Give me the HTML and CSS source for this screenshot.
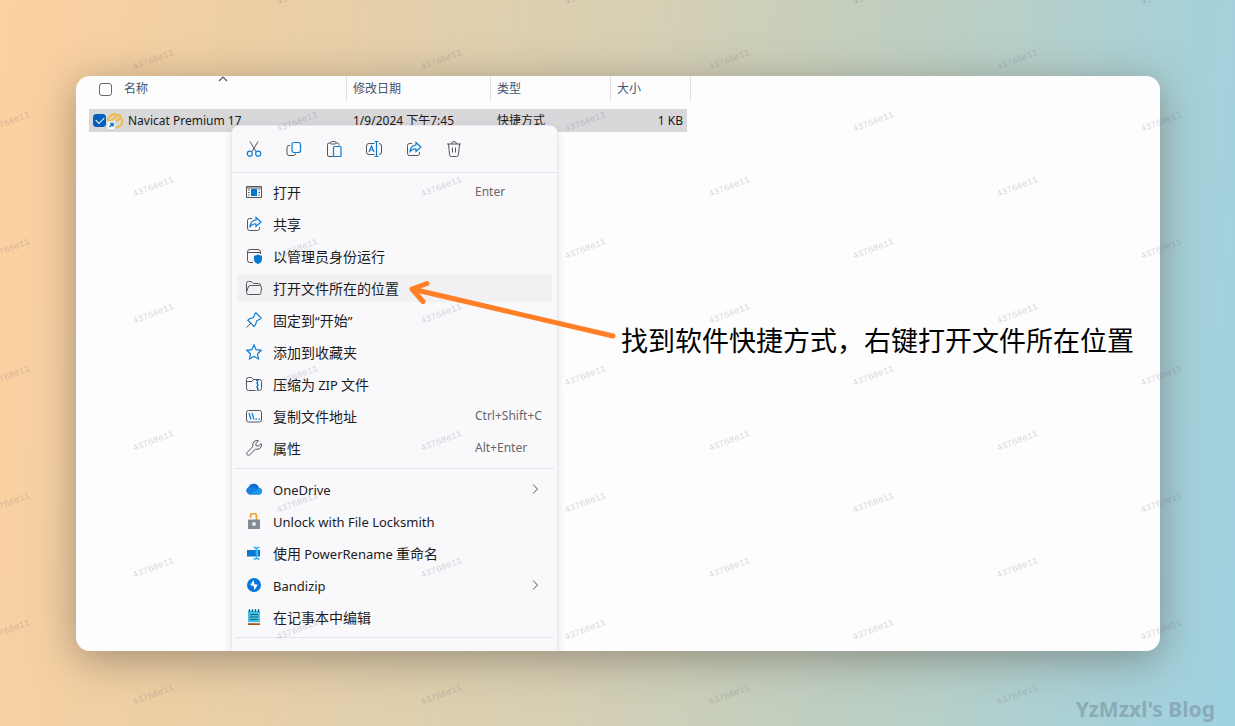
FILE: index.html
```html
<!DOCTYPE html>
<html lang="zh-CN">
<head>
<meta charset="utf-8">
<title>Navicat Premium 17</title>
<link rel="stylesheet" href="styles.css">
</head>
<body>
<main class="stage">
  <section class="window">
    <table class="files">
      <colgroup><col class="c-name"><col class="c-date"><col class="c-type"><col class="c-size"></colgroup>
      <thead>
        <tr>
          <th>
            <div class="name-cell head">
              <input type="checkbox" class="tick" id="all" aria-label="全选">
              <label for="all">名称</label>
              <svg class="sort" width="10" height="6" viewBox="0 0 10 6"><path d="M1 5l4-4 4 4" fill="none" stroke="#555" stroke-width="1.2"/></svg>
            </div>
          </th>
          <th>修改日期</th><th>类型</th><th>大小</th>
        </tr>
      </thead>
      <tbody>
        <tr>
          <td>
            <div class="name-cell">
              <input type="checkbox" class="tick" id="row" checked>
              <svg width="17" height="16" viewBox="0 0 16 16">
                <path d="M1 10C-.5 6 3 1.500 7 1c2-.2 2.500 2 1 3.500C6 6.500 2.500 7 1.500 9M7 4c3-3 6-2.500 6 0s-2.500 3-4.500 4M11 5c4-1 5 4 2.500 7-1.500 2-3.500 2.500-5.500 2.500" fill="none" stroke="#edbd4c" stroke-width="2"/>
                <path d="M0 8.500h7V16H0z" fill="#fff"/><path d="M2 14l3-3M2.600 10.500H5.500V13.500" fill="none" stroke="#0878c8" stroke-width="1.500"/>
              </svg>
              <label for="row">Navicat Premium 17</label>
            </div>
          </td>
          <td>1/9/2024 下午7:45</td><td>快捷方式</td><td class="size">1 KB</td>
        </tr>
      </tbody>
    </table>

    <div class="menu">
      <div class="tools">
        <button type="button" aria-label="剪切"><svg viewBox="0 0 16 16"><path class="g" d="M4 .5l6.200 10.500M12 .5L5.800 11"/><circle class="b" cx="3.800" cy="12.700" r="2.500"/><circle class="b" cx="12.200" cy="12.700" r="2.500"/></svg></button>
        <button type="button" aria-label="复制"><svg viewBox="0 0 16 16"><path class="g" d="M4 4.500H3A2 2 0 0 0 1 6.500v6A2 2 0 0 0 3 14.500h4.500a2 2 0 0 0 2-2"/><rect class="b" x="6" y="1.500" width="8.500" height="10" rx="2"/></svg></button>
        <button type="button" aria-label="粘贴"><svg viewBox="0 0 16 16"><path class="g" d="M4.500 2H3A1.500 1.500 0 0 0 1.500 3.500v10.500A1.500 1.500 0 0 0 3 15.500h4M10 2h1.500a1.500 1.500 0 0 1 1.500 1.500v1"/><rect class="g" x="4.500" y=".6" width="5.500" height="2.400" rx="1"/><rect class="b" x="7.500" y="5.500" width="7.500" height="10" rx="1"/></svg></button>
        <button type="button" aria-label="重命名"><svg viewBox="0 0 16 16"><path class="g" d="M8.500 2.500H3A2.500 2.500 0 0 0 .5 5v6A2.500 2.500 0 0 0 3 13.500h5.500M13 2.500a2.500 2.500 0 0 1 2.500 2.500v6a2.500 2.500 0 0 1-2.500 2.500"/><path class="b" d="M8.500.5h4M8.500 15.500h4M10.500.5v15M3 11l2.500-6L8 11M4 9h3"/></svg></button>
        <button type="button" aria-label="共享"><svg viewBox="0 0 16 16"><path class="g" d="M6 2.500H3.500a2 2 0 0 0-2 2v8a2 2 0 0 0 2 2h8a2 2 0 0 0 2-2V11"/><path class="b" d="M10 1.500L15 6l-5 4.500V8C7.500 7.800 5.800 8.500 4 10.500 4.500 6.500 6.500 4.300 10 4z"/></svg></button>
        <button type="button" aria-label="删除"><svg viewBox="0 0 16 16"><path class="g" d="M1 3h14M2.500 3l1 10.500a2 2 0 0 0 2 2h5a2 2 0 0 0 2-2l1-10.500M5.500 3a2.500 2.500 0 0 1 5 0M6.500 6.500v5M9.500 6.500v5"/></svg></button>
      </div>

      <div class="items">
        <button type="button" class="item"><svg viewBox="0 0 16 16"><path class="g" d="M.5 2.500h15v11H.5zM.5 4h15M2 6h1.500M2 8.500h1.500M2 11h1.500M12.500 6H14M12.500 8.500H14M12.500 11H14"/><path d="M5 5h6v7H5z" fill="#0078d4"/></svg><span>打开</span><kbd>Enter</kbd></button>
        <button type="button" class="item"><svg viewBox="0 0 16 16"><path class="g" d="M6 2.500H3.500a2 2 0 0 0-2 2v8a2 2 0 0 0 2 2h8a2 2 0 0 0 2-2V11"/><path class="b" d="M10 1.500L15 6l-5 4.500V8C7.500 7.800 5.800 8.500 4 10.500 4.500 6.500 6.500 4.300 10 4z"/></svg><span>共享</span></button>
        <button type="button" class="item"><svg viewBox="0 0 16 16"><path class="g" d="M7 14.500H4A2.500 2.500 0 0 1 1.500 12V4A2.500 2.500 0 0 1 4 1.500h8A2.500 2.500 0 0 1 14.500 4v2M1.500 4.500h13"/><path d="M12 6.300c1.200 1 2.500 1.400 4 1.400v3.500c0 2.300-1.500 3.800-4 4.800-2.500-1-4-2.500-4-4.800V7.700c1.500 0 2.800-.4 4-1.400z" fill="#0078d4"/></svg><span>以管理员身份运行</span></button>
        <button type="button" class="item current"><svg viewBox="0 0 16 16"><path class="g" d="M.5 12V3.500a2 2 0 0 1 2-2h2.700L7.500 3.500h5a2 2 0 0 1 2 2M.5 12l1.800-5a2 2 0 0 1 1.900-1.500h9.300a2 2 0 0 1 2 2.200l-.5 4.800a2 2 0 0 1-2 2H2.500a2 2 0 0 1-2-2"/></svg><span>打开文件所在的位置</span></button>
        <button type="button" class="item"><svg viewBox="0 0 16 16"><path class="b" d="M10 .8l5.200 5.200-1 1-3.500 1.800-1.200 4L8 14.300 1.900 8.200l1.500-1.400 4-1.300L9 1.800z"/><path class="g" d="M5 11L.5 15.500"/></svg><span>固定到<i>“</i>开始<i>”</i></span></button>
        <button type="button" class="item"><svg viewBox="0 0 16 16"><path class="b" d="M8 1l2.100 4.700 5.200.6-3.800 3.500 1 5.100L8 12.400l-4.500 2.500 1-5.100L.7 6.300l5.200-.6z"/></svg><span>添加到收藏夹</span></button>
        <button type="button" class="item"><svg viewBox="0 0 16 16"><path class="g" d="M9.500 14.500h-7a2 2 0 0 1-2-2v-9a2 2 0 0 1 2-2h3L7.500 3.500h6a2 2 0 0 1 2 2v7a2 2 0 0 1-2 2h-1M.5 5.500H6l1.500-2"/><path class="b" d="M11.500 4v11M10 4.500h2.500M10 7h1.500M11.500 9H13M10 11h1.500M11.500 13H13"/></svg><span>压缩为 <i>ZIP</i> 文件</span></button>
        <button type="button" class="item"><svg viewBox="0 0 16 16"><rect class="g" x=".5" y="2.500" width="15" height="11.500" rx="2"/><path class="b" d="M3 5l2 6.500M6 5l2 6.500M9.500 11.200H11M12.500 11.200H14"/></svg><span>复制文件地址</span><kbd>Ctrl+Shift+C</kbd></button>
        <button type="button" class="item"><svg viewBox="0 0 16 16"><path class="g" d="M12.500.8A4.300 4.300 0 0 0 7 6.500L1.200 12.300a1.700 1.700 0 0 0 2.500 2.500L9.500 9A4.300 4.300 0 0 0 15.200 3.500L12.500 6 10 5.800 9.900 3.500z"/></svg><span>属性</span><kbd>Alt+Enter</kbd></button>
        <hr>
        <button type="button" class="item"><svg viewBox="0 0 16 16"><path d="M3.500 13.500a4 4 0 0 1-.8-7.500A5.500 5.500 0 0 1 13 6.800a3.400 3.400 0 0 1 0 6.700z" fill="#0a6fd0"/><path d="M4 13.500l8-6c2.500-1.200 5 1.500 3.800 4A3 3 0 0 1 13 13.500z" fill="#1b9bf0"/><path d="M2.700 6C6 5 8 7 11.500 8L4 13.500H3.500A4 4 0 0 1 2.700 6z" fill="#1482dd"/></svg><span><i>OneDrive</i></span><svg class="more" viewBox="0 0 16 16"><path class="g" d="M6 3.500l4.500 4.500L6 12.500"/></svg></button>
        <button type="button" class="item"><svg viewBox="0 0 16 16"><path d="M4.500 5V3.500a3 3 0 0 1 6-.5v4" fill="none" stroke="#f2a12c" stroke-width="1.800"/><path d="M2 6.500h12V16H2z" fill="#858b94"/><circle cx="8" cy="11" r="2" fill="#e6e8eb"/></svg><span><i>Unlock with File Locksmith</i></span></button>
        <button type="button" class="item"><svg viewBox="0 0 16 16"><path d="M1 5h9v6.500H1z" fill="#0878d0"/><path d="M11.500 5H14v6.500h-2.500z" fill="#0878d0"/><path d="M7.500 2.500h1.500l1.500 1 1.500-1H13.500M7.500 14h1.500l1.500-1 1.500 1H13.500M10.500 3v10.500" fill="none" stroke="#35b0ee" stroke-width="1.600"/></svg><span>使用 <i>PowerRename</i> 重命名</span></button>
        <button type="button" class="item"><svg viewBox="0 0 16 16"><circle cx="8" cy="8" r="7" fill="#0877dc"/><path d="M7.500 3L4.200 8.200l3.300.5L8.500 13l3.300-5.200-3.300-.5z" fill="#fff"/></svg><span><i>Bandizip</i></span><svg class="more" viewBox="0 0 16 16"><path class="g" d="M6 3.500l4.500 4.500L6 12.500"/></svg></button>
        <button type="button" class="item"><svg viewBox="0 0 16 16"><path d="M2 1.500h12V14H2z" fill="#43bde0"/><path d="M2 14h12v2H2z" fill="#a65214"/><path d="M2 13.300h12v1H2z" fill="#fff"/><path d="M4 5.500h8M4 8h8M4 10.500h8M3.500 0v3M6.500 0v3M9.500 0v3M12.500 0v3" stroke="#126a87" stroke-width="1.100"/></svg><span>在记事本中编辑</span></button>
        <hr>
      </div>
    </div>

    <div class="callout">
      <svg class="arrow" width="210" height="64" viewBox="0 0 210 64"><path d="M206 59L5 12M20 6.500L5 12l11 12.500" fill="none" stroke="#ff7f27" stroke-width="5" stroke-linecap="round" stroke-linejoin="round"/></svg>
      <p>找到软件快捷方式，右键打开文件所在位置</p>
    </div>
  </section>
  <footer>YzMzxl's Blog</footer>
  <svg class="watermark" aria-hidden="true">
    <defs>
      <pattern id="mark" width="288" height="127" patternUnits="userSpaceOnUse">
        <text transform="translate(134 70) rotate(-21)">43768e11</text>
        <text transform="translate(-10 5) rotate(-21)">43768e11</text>
        <text transform="translate(278 5) rotate(-21)">43768e11</text>
        <text transform="translate(-10 132) rotate(-21)">43768e11</text>
        <text transform="translate(278 132) rotate(-21)">43768e11</text>
      </pattern>
    </defs>
    <rect width="100%" height="100%" fill="url(#mark)"/>
  </svg>
</main>
</body>
</html>
```
FILE: styles.css
```css
* { box-sizing: border-box; }

body {
  margin: 0;
  font-family: "Noto Sans", "Noto Sans CJK SC", sans-serif;
  font-size: 12px;
  color: #1a1a1a;
}

.stage {
  position: relative;
  display: flex;
  flex-direction: column;
  height: 100vh;
  padding: 76px 75px 0 76px;
  overflow: hidden;
  background: linear-gradient(97deg, #fdd1a0 0%, #eccfa5 20%, #d5cfb4 50%, #bccfc3 72%, #a5d1da 92%, #a0d2e0 100%);
}

.window {
  position: relative;
  flex: 1;
  overflow: hidden;
  border-radius: 14px;
  background: #fdfdfe;
}

.stage::before {
  content: "";
  position: absolute;
  inset: 76px 75px 75px 76px;
  border-radius: 14px;
  box-shadow: 0 8px 40px rgba(90, 80, 70, .5);
}

.files {
  width: 602px;
  margin-left: 13px;
  table-layout: fixed;
  border-spacing: 0;
}

.c-name { width: 258px; }
.c-date { width: 144px; }
.c-type { width: 120px; }
.c-size { width: 80px; }

.files th {
  height: 26px;
  padding: 0 6px;
  border-right: 1px solid #e6dfea;
  font-weight: 400;
  line-height: 26px;
  text-align: left;
  color: #44546f;
}

.files td {
  height: 30px;
  padding: 0 6px;
  border-top: 7px solid transparent;
  background: #d8d7d9;
  background-clip: padding-box;
  line-height: 23px;
}

.files th:first-child,
.files td:first-child { padding: 0 4px; }

.files td.size {
  border-right: 4px solid transparent;
  padding-right: 4px;
  text-align: right;
}

.name-cell {
  position: relative;
  display: flex;
  align-items: center;
}

.name-cell svg + label { margin-left: 4px; }

.head { padding-left: 6px; }
.head label { margin-left: 12px; }

.sort {
  position: absolute;
  left: 125px;
  top: 0;
}

.tick {
  appearance: none;
  flex: none;
  display: grid;
  place-items: center;
  width: 13px;
  height: 13px;
  margin: 0;
  border: 1px solid #6a6670;
  border-radius: 3px;
  background: #fff;
}

.tick:checked {
  margin-right: 1px;
  border-color: #0560bd;
  background: #0560bd;
}

.tick:checked::before {
  content: "";
  width: 7px;
  height: 4px;
  margin-bottom: 2px;
  border: solid #fff;
  border-width: 0 0 1px 1px;
  transform: rotate(-45deg);
}

.menu {
  position: absolute;
  left: 155px;
  top: 49px;
  width: 327px;
  height: 600px;
  border: 1px solid #ebe7ee;
  border-radius: 8px;
  background: #f9f8fa;
  box-shadow: 0 3px 8px rgba(60, 50, 70, .12);
}

.tools {
  display: flex;
  align-items: center;
  height: 47px;
  padding-left: 2px;
  border-bottom: 1px solid #e8e4eb;
}

.tools button {
  display: grid;
  place-items: center;
  width: 40px;
  height: 40px;
  padding: 0;
  border: 0;
  background: none;
}

.tools svg,
.item svg {
  flex: none;
  width: 16px;
  height: 16px;
}

.g { fill: none; stroke: #55555a; stroke-width: 1; }
.b { fill: none; stroke: #0a7cd6; stroke-width: 1.2; }

.items {
  display: flex;
  flex-direction: column;
  gap: 4px;
  padding: 5px 5px;
}

.item {
  display: grid;
  grid-template-columns: 16px 191px 1fr;
  column-gap: 11px;
  align-items: center;
  height: 28px;
  padding: 0 0 0 9px;
  border: 0;
  border-radius: 4px;
  background: none;
  font: 14px/20px "Noto Sans CJK SC", sans-serif;
  text-align: left;
  color: #1c1c1e;
  white-space: nowrap;
}

.item.current { background: #f1f0f2; }

.item i {
  font: 13px/20px "Noto Sans", sans-serif;
}

.item kbd {
  font: 12px/20px "Noto Sans", sans-serif;
  color: #68666c;
}

.item .more { margin-left: 52px; }

.items hr {
  height: 1px;
  margin: 2px -2px;
  border: 0;
  background: #e8e4eb;
}

.callout {
  position: absolute;
  left: 331px;
  top: 201px;
  display: flex;
  align-items: flex-start;
  gap: 4px;
}

.callout p {
  margin: 43px 0 0;
  font: 27px/40px "Noto Sans CJK SC", sans-serif;
  color: #000;
  white-space: nowrap;
}

footer {
  position: relative;
  height: 75px;
  margin-right: -55px;
  padding-top: 44px;
  font: 700 21px/28px "Noto Sans", sans-serif;
  text-align: right;
  color: #8babb7;
}

.watermark {
  position: absolute;
  inset: 0;
  width: 100%;
  height: 100%;
  pointer-events: none;
}

.watermark text {
  font: 9px "Liberation Mono", monospace;
  fill: #6c5a78;
  fill-opacity: .26;
}
```
